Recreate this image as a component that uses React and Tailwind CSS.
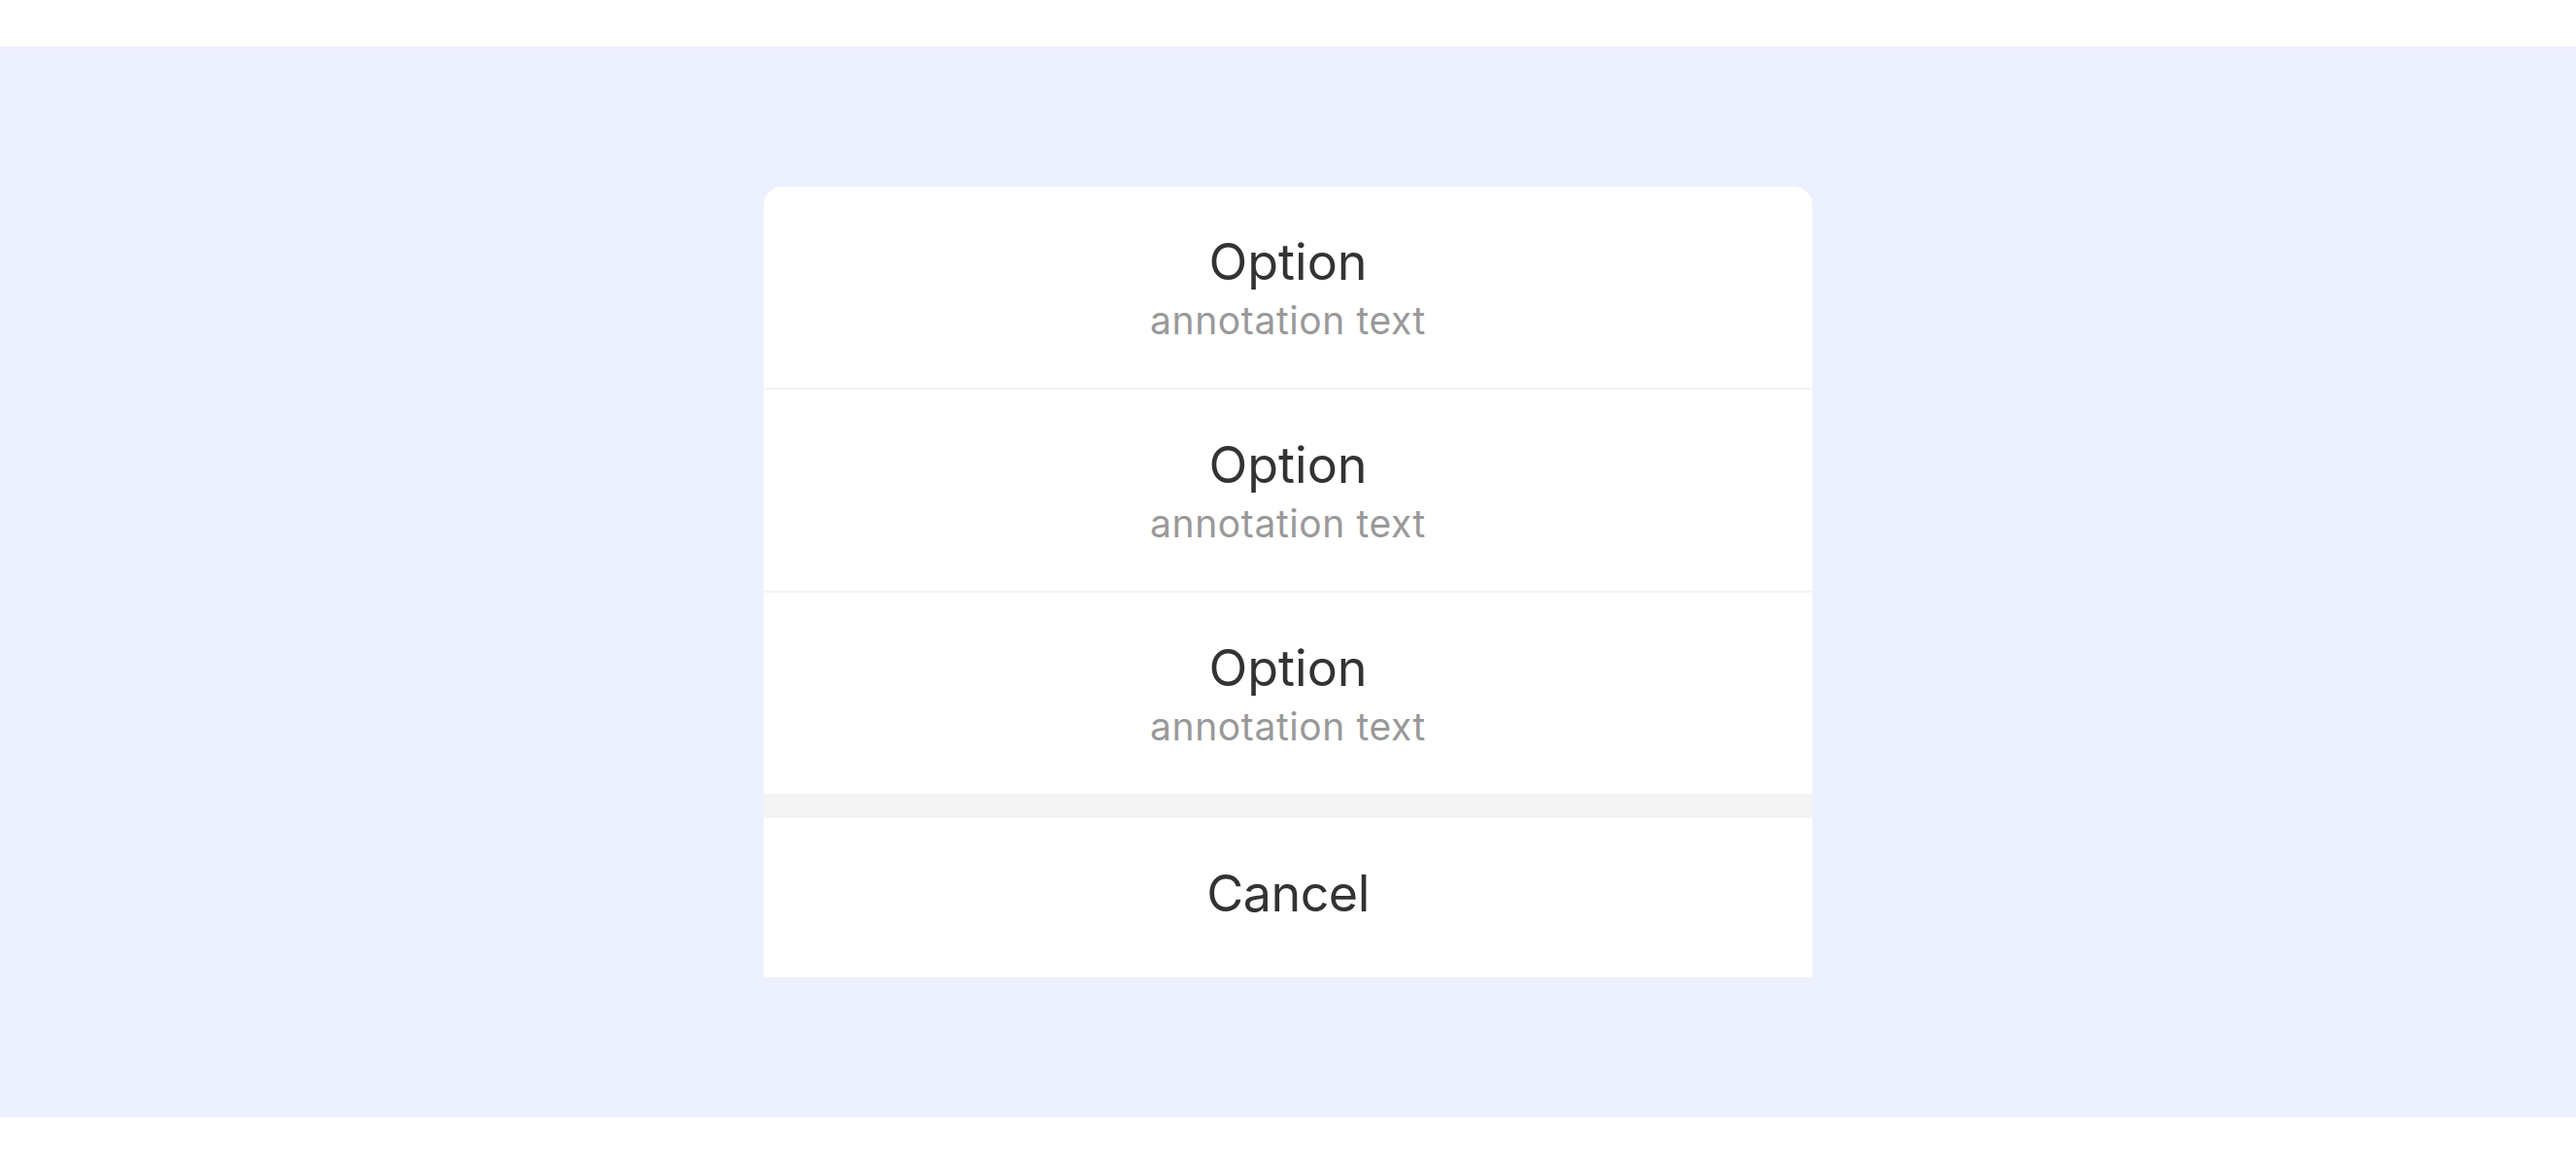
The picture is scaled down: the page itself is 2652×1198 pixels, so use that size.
export default function App() {
  const items = [0, 1, 2];
  return (
    <div className="w-[2652px] h-[1198px] bg-white" style={{ fontFamily: "Inter, 'Noto Sans', sans-serif" }}>
      <div className="h-[48px]" />
      <div className="h-[1102px] bg-[#edf0fe] flex items-center justify-center">
        <div className="w-[1080px] flex flex-col">
          <div className="bg-white rounded-t-[20px] overflow-hidden flex flex-col">
            {items.map((i) => (
              <div
                key={i}
                className={`flex flex-col items-center justify-center pb-[3px] ${i > 0 ? "border-t-2 border-[#f2f2f2] h-[209px]" : "h-[207px]"}`}
              >
                <div className="text-[52px] leading-[65px] text-[#333333]">Option</div>
                <div className="text-[39px] leading-[43px] mt-[6px] tracking-[0.6px] text-[#999999]">annotation text</div>
              </div>
            ))}
          </div>
          <div className="h-[25px] bg-[#f4f4f4]" />
          <div className="h-[164px] pb-[10px] bg-white flex items-center justify-center">
            <div className="text-[52px] leading-[65px] tracking-[-0.5px] text-[#333333]">Cancel</div>
          </div>
        </div>
      </div>
    </div>
  );
}
